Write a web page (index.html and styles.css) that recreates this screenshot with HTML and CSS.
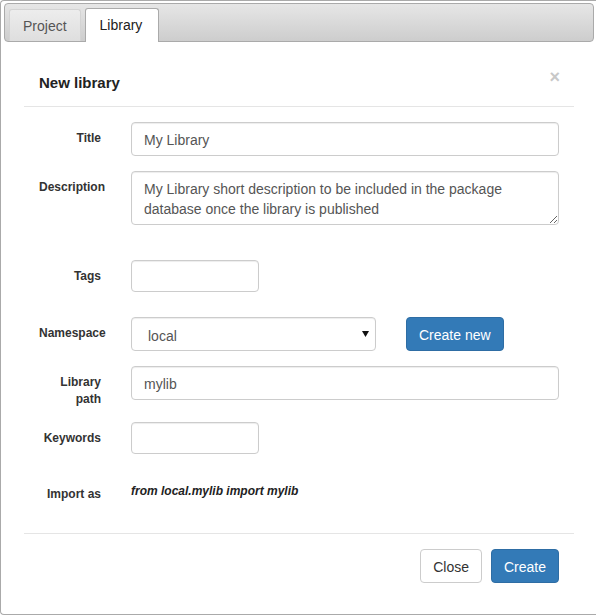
FILE: index.html
```html
<!DOCTYPE html>
<html>
<head>
<meta charset="utf-8">
<link rel="stylesheet" href="styles.css">
</head>
<body>
<div class="widget">
  <div class="tabnav">
    <div class="tab">Project</div>
    <div class="tab active">Library</div>
  </div>
  <div class="panel">
    <div class="mheader">
      <div class="mtitle">New library</div>
      <div class="close">×</div>
    </div>
    <div class="mbody">
      <div class="row r-title">
        <div class="label">Title</div>
        <input class="field wide" type="text" value="My Library">
      </div>
      <div class="row r-desc">
        <div class="label">Description</div>
        <textarea class="field wide area" rows="2">My Library short description to be included in the package database once the library is published</textarea>
      </div>
      <div class="row r-tags">
        <div class="label">Tags</div>
        <input class="field small" type="text" value="">
      </div>
      <div class="row r-ns">
        <div class="label">Namespace</div>
        <div class="field select">
          <span class="seltext">local</span>
          <svg class="arrow" width="7" height="6" viewBox="0 0 7 6"><path d="M0 0H7L3.5 6Z" fill="#111"/></svg>
        </div>
        <button class="btn primary newbtn">Create new</button>
      </div>
      <div class="row r-path">
        <div class="label">Library path</div>
        <input class="field wide" type="text" value="mylib">
      </div>
      <div class="row r-kw">
        <div class="label">Keywords</div>
        <input class="field small" type="text" value="">
      </div>
      <div class="row r-imp">
        <div class="label">Import as</div>
        <div class="static">from local.mylib import mylib</div>
      </div>
    </div>
    <div class="mfooter">
      <button class="btn default">Close</button>
      <button class="btn primary">Create</button>
    </div>
  </div>
</div>
</body>
</html>
```
FILE: styles.css
```css
html, body {
  margin: 0;
  padding: 0;
  background: #fff;
  overflow: hidden;
  font-family: "Liberation Sans", Arial, sans-serif;
}
.widget {
  box-sizing: border-box;
  width: 604px;
  height: 615px;
  border: 1px solid #aaa;
  border-right: none;
  border-radius: 4px 0 0 4px;
  padding: 2px 3px;
  background: #fff;
}
.tabnav {
  box-sizing: border-box;
  width: 590px;
  display: flex;
  align-items: flex-end;
  border: 1px solid #aaa;
  border-radius: 4px;
  padding: 4px 4px 0 4px;
  background: linear-gradient(#e6e6e6, #cdcdcd);
}
.tab {
  box-sizing: border-box;
  height: 32px;
  padding: 0 13px;
  margin-right: 4px;
  display: flex;
  align-items: center;
  font-size: 14px;
  color: #555;
  border: 1px solid #d3d3d3;
  border-bottom: none;
  border-radius: 3px 3px 0 0;
  background: linear-gradient(#ededed, #dedede);
}
.tab.active {
  height: 34px;
  margin-bottom: -1px;
  padding: 0 16px 1px 14px;
  color: #212121;
  border-color: #aaa;
  background: #fff;
}
.panel {
  box-sizing: border-box;
  width: 590px;
  padding: 15px 20px 0 20px;
}
.mheader {
  display: flex;
  justify-content: space-between;
  align-items: flex-start;
  padding: 15px 15px 13px;
  border-bottom: 1px solid #e5e5e5;
}
.mtitle {
  font-size: 15px;
  line-height: 21px;
  font-weight: bold;
  color: #222;
}
.close {
  font-size: 18px;
  font-weight: bold;
  line-height: 1;
  color: #c8c8c8;
  margin-top: -4px;
  margin-right: -1px;
}
.mbody {
  padding: 15px 15px 30px;
}
.row {
  display: flex;
  align-items: flex-start;
}
.label {
  box-sizing: border-box;
  width: 62px;
  flex: none;
  margin-right: 30px;
  padding-top: 8px;
  font-size: 12px;
  line-height: 17px;
  font-weight: bold;
  color: #333;
  text-align: right;
  white-space: normal;
}
.r-desc .label, .r-ns .label {
  white-space: nowrap;
  text-align: left;
}
.r-title { margin-bottom: 15px; }
.r-desc { margin-bottom: 35px; }
.r-tags { margin-bottom: 25px; }
.r-ns { margin-bottom: 15px; }
.r-path { margin-bottom: 14px; }
.r-kw { margin-bottom: 24px; }
.field {
  box-sizing: border-box;
  margin: 0;
  height: 34px;
  padding: 7px 12px 5px;
  font-family: "Liberation Sans", Arial, sans-serif;
  font-size: 14px;
  line-height: 20px;
  color: #555;
  background: #fff;
  border: 1px solid #ccc;
  border-radius: 4px;
  box-shadow: inset 0 1px 1px rgba(0,0,0,.075);
  outline: none;
}
.wide { width: 428px; }
.small { width: 128px; height: 32px; }
.area {
  height: 54px;
  resize: vertical;
  overflow: hidden;
  display: block;
}
.select {
  width: 245px;
  display: flex;
  align-items: center;
  justify-content: space-between;
  padding: 8px 6px 4px 16px;
}
.seltext {
  line-height: 20px;
}
.arrow {
  margin-top: -5px;
  margin-right: 0;
}
.newbtn {
  margin-left: 30px;
}
.btn {
  box-sizing: border-box;
  height: 34px;
  padding: 7px 12px 5px;
  font-family: "Liberation Sans", Arial, sans-serif;
  font-size: 14px;
  line-height: 20px;
  border-radius: 4px;
  border: 1px solid transparent;
  cursor: pointer;
}
.primary {
  color: #fff;
  background: #337ab7;
  border-color: #2e6da4;
}
.default {
  color: #333;
  background: #fff;
  border-color: #ccc;
}
.static {
  padding-top: 5px;
  font-size: 12px;
  line-height: 17px;
  font-weight: bold;
  font-style: italic;
  color: #222;
}
.mfooter {
  display: flex;
  justify-content: flex-end;
  gap: 9px;
  padding: 15px;
  border-top: 1px solid #e5e5e5;
}
```
